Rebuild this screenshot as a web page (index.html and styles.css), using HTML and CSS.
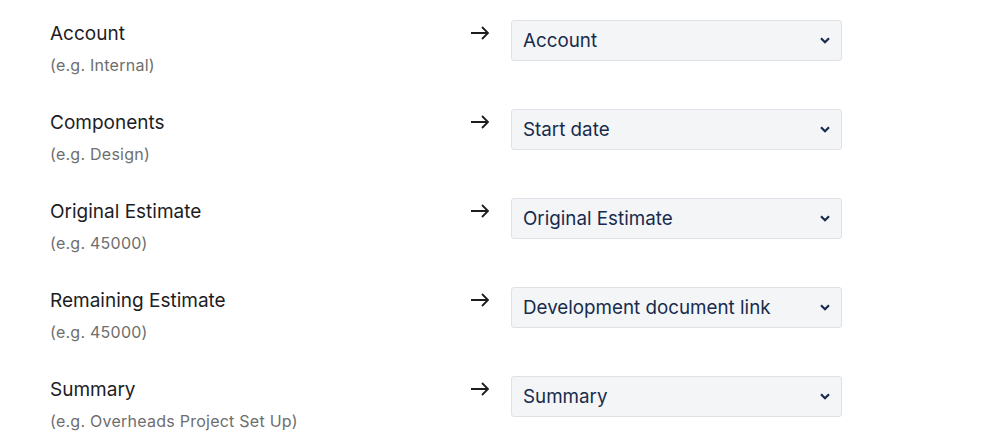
FILE: index.html
```html
<!DOCTYPE html>
<html lang="en">
<head>
    <meta charset="UTF-8">
    <title>Field mapping</title>
    <link rel="stylesheet" href="styles.css">
</head>
<body>

<div class="mapping">
    <div class="map-row">
        <div class="source">
            <div class="source-name">Account</div>
            <div class="source-hint">(e.g. Internal)</div>
        </div>
        <div class="arrow"><svg width="20" height="14" viewBox="0 0 20 14"><path d="M1 7h17M12 1l6 6-6 6" fill="none" stroke="#1d1d1f" stroke-width="1.8"/></svg></div>
        <div class="target"><span>Account</span><svg class="chev" width="10" height="7" viewBox="0 0 10 7"><path d="M1 1.2l4 4 4-4" fill="none" stroke="#172b4d" stroke-width="2.2"/></svg></div>
    </div>

    <div class="map-row">
        <div class="source">
            <div class="source-name">Components</div>
            <div class="source-hint">(e.g. Design)</div>
        </div>
        <div class="arrow"><svg width="20" height="14" viewBox="0 0 20 14"><path d="M1 7h17M12 1l6 6-6 6" fill="none" stroke="#1d1d1f" stroke-width="1.8"/></svg></div>
        <div class="target"><span>Start date</span><svg class="chev" width="10" height="7" viewBox="0 0 10 7"><path d="M1 1.2l4 4 4-4" fill="none" stroke="#172b4d" stroke-width="2.2"/></svg></div>
    </div>

    <div class="map-row">
        <div class="source">
            <div class="source-name">Original Estimate</div>
            <div class="source-hint">(e.g. 45000)</div>
        </div>
        <div class="arrow"><svg width="20" height="14" viewBox="0 0 20 14"><path d="M1 7h17M12 1l6 6-6 6" fill="none" stroke="#1d1d1f" stroke-width="1.8"/></svg></div>
        <div class="target"><span>Original Estimate</span><svg class="chev" width="10" height="7" viewBox="0 0 10 7"><path d="M1 1.2l4 4 4-4" fill="none" stroke="#172b4d" stroke-width="2.2"/></svg></div>
    </div>

    <div class="map-row">
        <div class="source">
            <div class="source-name">Remaining Estimate</div>
            <div class="source-hint">(e.g. 45000)</div>
        </div>
        <div class="arrow"><svg width="20" height="14" viewBox="0 0 20 14"><path d="M1 7h17M12 1l6 6-6 6" fill="none" stroke="#1d1d1f" stroke-width="1.8"/></svg></div>
        <div class="target"><span>Development document link</span><svg class="chev" width="10" height="7" viewBox="0 0 10 7"><path d="M1 1.2l4 4 4-4" fill="none" stroke="#172b4d" stroke-width="2.2"/></svg></div>
    </div>

    <div class="map-row">
        <div class="source">
            <div class="source-name">Summary</div>
            <div class="source-hint">(e.g. Overheads Project Set Up)</div>
        </div>
        <div class="arrow"><svg width="20" height="14" viewBox="0 0 20 14"><path d="M1 7h17M12 1l6 6-6 6" fill="none" stroke="#1d1d1f" stroke-width="1.8"/></svg></div>
        <div class="target"><span>Summary</span><svg class="chev" width="10" height="7" viewBox="0 0 10 7"><path d="M1 1.2l4 4 4-4" fill="none" stroke="#172b4d" stroke-width="2.2"/></svg></div>
    </div>
</div>

</body>
</html>
```

FILE: styles.css
```css
:root { --text: #172b4d; --subtle: #6e6e6e; --field-bg: #f4f5f7; --field-border: #dfe1e6; }

body { margin: 0; background: #fff; color: var(--text); font-family: Inter, "Noto Sans", sans-serif; overflow: hidden; }

/* --- Mapping list --- */
.mapping { display: flex; flex-direction: column; gap: 34px; padding: 20px 0 0 50px; }

.map-row { display: grid; grid-template-columns: 420px 41px 331px; align-items: start; }

.source { padding-top: 2px; }
.source-name { font-size: 19px; line-height: 24px; color: #1d1d1f; }
.source-hint { font-size: 16px; line-height: 20px; letter-spacing: 0.25px; color: var(--subtle); margin-top: 9px; }

.arrow { padding-top: 6px; }
.arrow svg { display: block; }

/* --- Select box --- */
.target { height: 41px; box-sizing: border-box; background: var(--field-bg); border: 1px solid var(--field-border); border-radius: 3px; display: flex; align-items: center; justify-content: space-between; padding: 0 11px; font-size: 18.8px; color: var(--text); }
.chev { display: block; }
```
